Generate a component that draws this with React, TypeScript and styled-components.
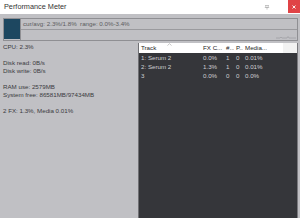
import React from "react";
import styled, { createGlobalStyle } from "styled-components";

const Global = createGlobalStyle`
  html, body { margin: 0; padding: 0; }
  body {
    width: 300px; height: 218px; overflow: hidden;
    background: #c0c0c4;
    font-family: "Liberation Sans", Arial, sans-serif;
  }
`;

const Window = styled.div`
  width: 300px; height: 218px;
  display: flex; flex-direction: column;
  background: #c0c0c4;
`;

const TitleBar = styled.div`
  height: 14px; flex: none;
  background: #ffffff;
  display: flex; align-items: center;
`;

const Title = styled.div`
  flex: 1;
  padding-left: 4px;
  font-size: 7.3px;
  color: #333;
  line-height: 14px;
  padding-bottom: 1px;
`;

const PinButton = styled.div`
  width: 10px; height: 13px;
  display: flex; align-items: center; justify-content: center;
  margin-right: 16px;
`;

const CloseButton = styled.div`
  width: 12px; height: 13px; align-self: flex-start;
  background: #e04346;
  display: flex; align-items: center; justify-content: center;
`;

const Body = styled.div`
  flex: 1;
  display: flex; flex-direction: column;
  padding: 4px 2px 0 3px;
  border-left: 0;
  min-height: 0;
`;

const Graph = styled.div`
  position: relative;
  height: 21px; flex: none;
  border: 1px solid #8f8f93;
  display: flex;
`;

const Swatch = styled.div`
  width: 16px; height: 20px;
  background: #1d4760;
  flex: none;
`;

const GraphArea = styled.div`
  flex: 1;
  border-left: 1px solid #8f8f93;
  display: flex; flex-direction: column;
`;

const GraphTop = styled.div`
  height: 10px;
  border-bottom: 1px solid #9a9a9e;
  font-size: 6.2px;
  color: #5c5c60;
  line-height: 9px;
  padding-left: 2px;
  white-space: pre;
`;

const GraphTrace = styled.svg`
  position: absolute;
  right: 1px; bottom: 1px;
`;

const Content = styled.div`
  flex: 1;
  display: flex;
  margin-top: 2px;
  min-height: 0;
`;

const Stats = styled.div`
  width: 135px; flex: none;
  display: flex; flex-direction: column;
`;

const StatLine = styled.div<{ $blank?: boolean }>`
  height: 8px;
  font-size: 6.2px;
  line-height: 8px;
  color: #3a3a3e;
  white-space: nowrap;
`;

const TablePanel = styled.div`
  flex: 1;
  background: #35363a;
  border-left: 1px solid #707074;
  border-right: 1px solid #7a7a7e;
  display: flex; flex-direction: column;
`;

const HeaderRow = styled.div`
  height: 10px;
  display: flex;
  background: #f2f2f2;
`;

const Row = styled.div`
  height: 9px;
  display: flex;
`;

const Cell = styled.div<{ $w: number; $header?: boolean }>`
  position: relative;
  width: ${(p) => p.$w}px;
  flex: none;
  padding-left: 2px;
  box-sizing: border-box;
  font-size: 6.2px;
  line-height: ${(p) => (p.$header ? "10px" : "9px")};
  color: ${(p) => (p.$header ? "#222" : "#cfcfd2")};
  background: ${(p) => (p.$header ? "#ffffff" : "transparent")};
  white-space: nowrap;
  overflow: hidden;
`;

const SortMark = styled.svg`
  position: absolute;
  left: 28px; top: 0px;
`;

const cols = [62, 23, 10, 9, 40];

const rows = [
  ["1: Serum 2", "0.0%", "1", "0", "0.01%"],
  ["2: Serum 2", "1.3%", "1", "0", "0.01%"],
  ["3", "0.0%", "0", "0", "0.0%"],
];

const stats = [
  "CPU: 2.3%",
  "",
  "Disk read: 0B/s",
  "Disk write: 0B/s",
  "",
  "RAM use: 2579MB",
  "System free: 86581MB/97434MB",
  "",
  "2 FX: 1.3%, Media 0.01%",
];

export default function App() {
  return (
    <>
      <Global />
      <Window>
        <TitleBar>
          <Title>Performance Meter</Title>
          <PinButton>
            <svg width="6" height="6" viewBox="0 0 6 6">
              <path d="M1 1.5H5M1.8 1.5V3.5H4.2V1.5M0.8 3.5H5.2M3 3.5V5.6" stroke="#b0b0b0" strokeWidth="0.7" fill="none" />
            </svg>
          </PinButton>
          <CloseButton>
            <svg width="4" height="4" viewBox="0 0 4 4">
              <path d="M0.5 0.5L3.5 3.5M3.5 0.5L0.5 3.5" stroke="#ffffff" strokeWidth="0.9" />
            </svg>
          </CloseButton>
        </TitleBar>
        <Body>
          <Graph>
            <Swatch />
            <GraphArea>
              <GraphTop>{"cur/avg: 2.3%/1.8%  range: 0.0%-3.4%"}</GraphTop>
            </GraphArea>
            <GraphTrace width="20" height="4" viewBox="0 0 20 4">
              <path d="M0 3H4L5 2L6 3H11L12 1.5L13 3H20" stroke="#a0a0a4" strokeWidth="0.8" fill="none" />
            </GraphTrace>
          </Graph>
          <Content>
            <Stats>
              {stats.map((s, i) => (
                <StatLine key={i}>{s}</StatLine>
              ))}
            </Stats>
            <TablePanel>
              <HeaderRow>
                {["Track", "FX C...", "#...", "P...", "Media..."].map((h, i) => (
                  <Cell key={i} $w={cols[i]} $header>
                    {h}
                    {i === 0 && (
                      <SortMark width="5" height="3" viewBox="0 0 5 3">
                        <path d="M0.5 2.5L2.5 0.7L4.5 2.5" stroke="#a0a0a0" strokeWidth="0.6" fill="none" />
                      </SortMark>
                    )}
                  </Cell>
                ))}
              </HeaderRow>
              {rows.map((r, ri) => (
                <Row key={ri}>
                  {r.map((c, ci) => (
                    <Cell key={ci} $w={cols[ci]}>
                      {c}
                    </Cell>
                  ))}
                </Row>
              ))}
            </TablePanel>
          </Content>
        </Body>
      </Window>
    </>
  );
}
